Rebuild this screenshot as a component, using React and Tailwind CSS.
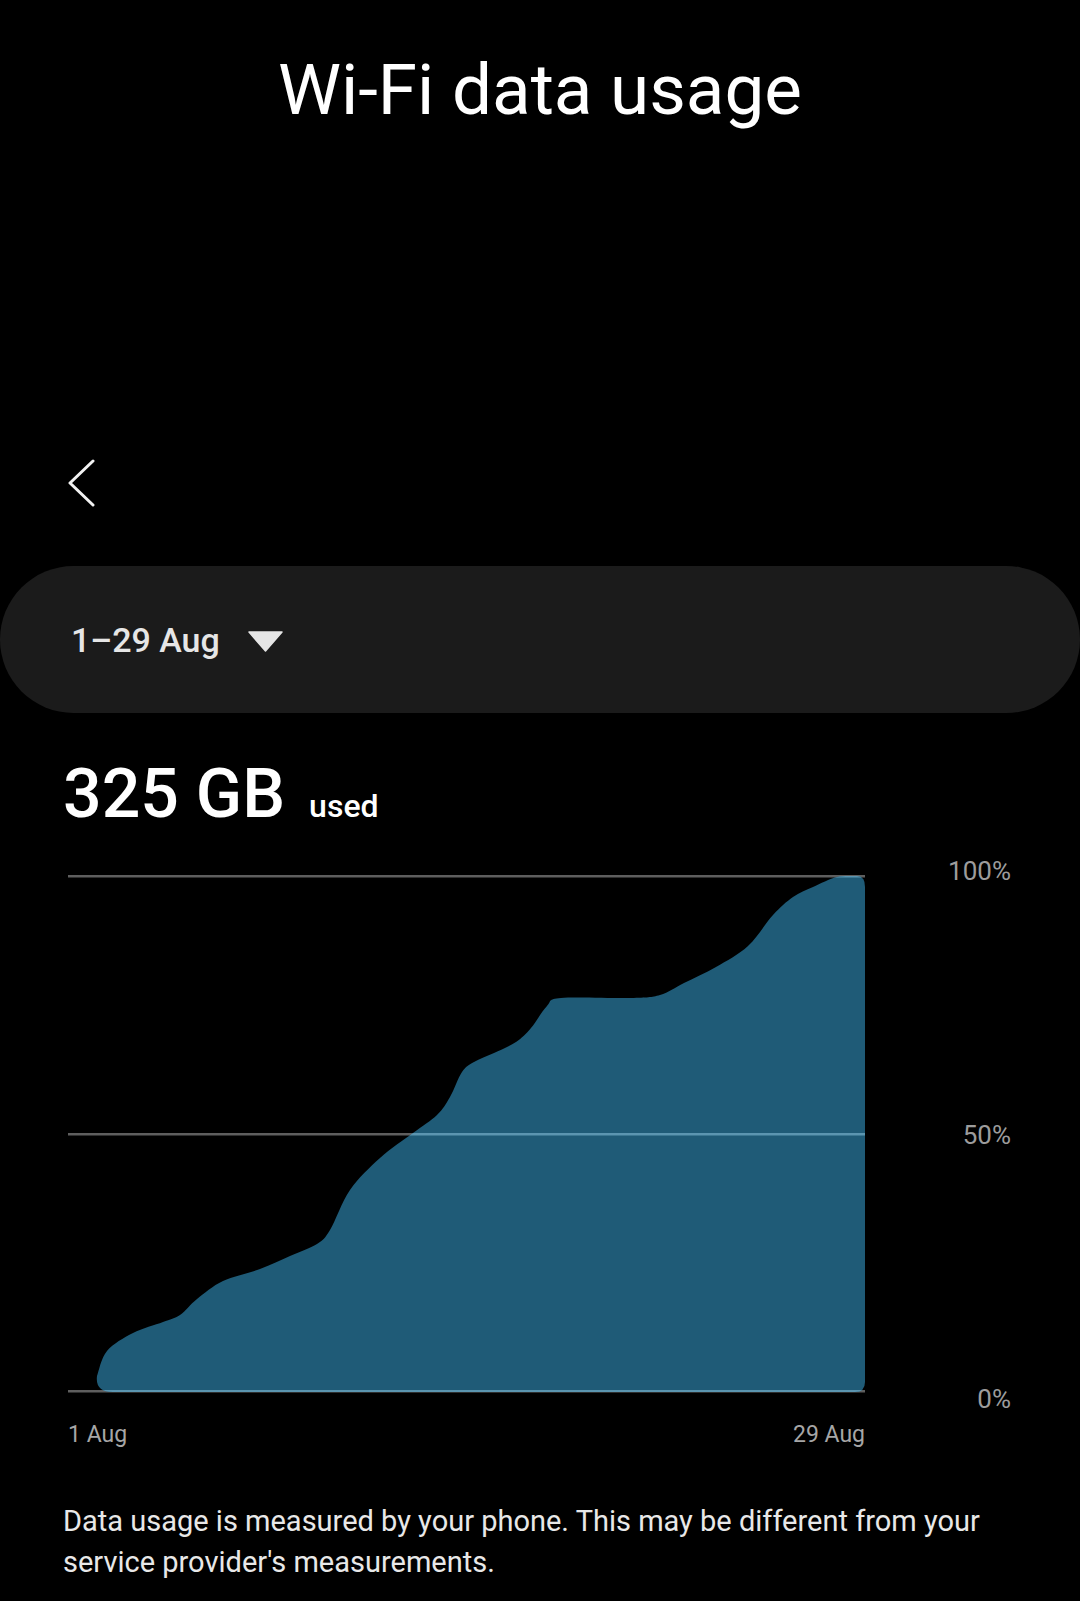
import React from "react";

// cumulative usage curve, in chart-local pixels (chart is 797 x 518)
const pts = [
  [29, 501], [39, 476], [65, 458], [95, 447], [112, 440], [129, 424], [155, 406],
  [192, 394], [222, 381], [249, 369], [262, 355], [282, 315], [312, 283], [345, 258],
  [369, 240], [382, 222], [394, 197], [406, 187], [426, 178], [448, 167], [463, 153],
  [479, 131], [493, 123], [563, 123], [592, 120], [616, 108], [648, 92], [680, 71],
  [705, 40], [725, 22], [745, 12], [769, 2], [789, 1],
];

function smooth(p) {
  let d = `M ${p[0][0]} ${p[0][1]}`;
  for (let i = 0; i < p.length - 1; i++) {
    const p0 = p[i - 1] || p[i];
    const p1 = p[i];
    const p2 = p[i + 1];
    const p3 = p[i + 2] || p2;
    const c1x = p1[0] + (p2[0] - p0[0]) / 6;
    const c1y = p1[1] + (p2[1] - p0[1]) / 6;
    const c2x = p2[0] - (p3[0] - p1[0]) / 6;
    const c2y = p2[1] - (p3[1] - p1[1]) / 6;
    d += ` C ${c1x} ${c1y}, ${c2x} ${c2y}, ${p2[0]} ${p2[1]}`;
  }
  return d;
}

const areaPath =
  smooth(pts) +
  " Q 797 1 797 12 L 797 507 Q 797 517 787 517 L 45 517 Q 27 517 29 501 Z";

function UsageChart() {
  const lines = [1, 259, 516];
  return (
    <svg width="797" height="518" viewBox="0 0 797 518" className="block">
      <defs>
        <clipPath id="area">
          <path d={areaPath} />
        </clipPath>
      </defs>
      {lines.map((y) => (
        <rect key={y} x="0" y={y - 1} width="797" height="2.5" fill="#5e5e5e" />
      ))}
      <path d={areaPath} fill="#1f5b77" />
      <g clipPath="url(#area)">
        {lines.map((y) => (
          <rect key={y} x="0" y={y - 1} width="797" height="2.5" fill="#5b95b0" />
        ))}
      </g>
    </svg>
  );
}

export default function App() {
  return (
    <div
      className="w-[1080px] h-[1601px] bg-black text-white overflow-hidden"
      style={{ fontFamily: "Roboto, 'Noto Sans', sans-serif" }}
    >
      <div className="pt-[54px] text-center">
        <h1 className="text-[71px] leading-[71px] font-normal text-white">Wi-Fi data usage</h1>
      </div>

      <div className="mt-[334px] pl-[67px]">
        <svg width="28" height="48" viewBox="0 0 28 48" fill="none">
          <path d="M26 2 L3 24 L26 46" stroke="#f2f2f2" strokeWidth="3" strokeLinecap="round" strokeLinejoin="round" />
        </svg>
      </div>

      <div className="mt-[59px] h-[147px] w-full rounded-full bg-[#1b1b1b] flex items-center pl-[71px]">
        <span className="text-[34px] leading-none font-medium text-[#e6e6e6]">1–29 Aug</span>
        <svg width="35" height="21" viewBox="0 0 35 21" className="ml-[28px] mt-[4px]">
          <path d="M1 1 H34 L17.5 20 Z" fill="#e6e6e6" stroke="#e6e6e6" strokeWidth="1.5" strokeLinejoin="round" />
        </svg>
      </div>

      <div className="mt-[46px] pl-[63px] flex items-baseline h-[70px]">
        <span className="text-[68px] leading-[70px] font-medium text-white">325 GB</span>
        <span className="ml-[24px] text-[32px] font-medium text-white">used</span>
      </div>

      <div className="mt-[27px] flex">
        <div className="pl-[68px] pt-[19px]">
          <UsageChart />
        </div>
        <div className="flex-1 h-[558px] pr-[69px] flex flex-col justify-between items-end text-[26px] leading-[30px] text-[#9c9c9c]">
          <span>100%</span>
          <span>50%</span>
          <span>0%</span>
        </div>
      </div>

      <div className="mt-[7px] ml-[68px] w-[797px] flex justify-between text-[23px] leading-[28px] text-[#a6a6a6]">
        <span>1 Aug</span>
        <span>29 Aug</span>
      </div>

      <p className="mt-[52px] pl-[63px] pr-[60px] text-[29px] leading-[41px] text-[#e8e8e8]">
        Data usage is measured by your phone. This may be different from your service provider's measurements.
      </p>
    </div>
  );
}
